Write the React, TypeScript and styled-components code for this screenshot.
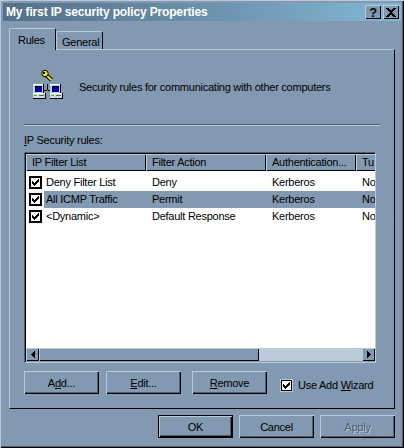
import styled, { createGlobalStyle } from "styled-components";

const FACE = "#8299b1";
const LIGHT = "#b9c9d9";
const SHADE = "#4d5f72";
const DARK = "#000000";

const GlobalStyle = createGlobalStyle`
  html, body {
    margin: 0;
    padding: 0;
    background: ${FACE};
  }
  * {
    box-sizing: border-box;
  }
`;

const columns = [
  { label: "IP Filter List", width: 120 },
  { label: "Filter Action", width: 120 },
  { label: "Authentication...", width: 90 },
  { label: "Tu", width: 40 },
];

const rules = [
  { name: "Deny Filter List", action: "Deny", auth: "Kerberos", tunnel: "None", selected: false },
  { name: "All ICMP Traffic", action: "Permit", auth: "Kerberos", tunnel: "None", selected: true },
  { name: "<Dynamic>", action: "Default Response", auth: "Kerberos", tunnel: "None", selected: false },
];

function PolicyIcon() {
  const computer = (x: number) => (
    <g shapeRendering="crispEdges">
      <rect x={x} y="15" width="11" height="9" fill="#c8d2dc" />
      <rect x={x} y="15" width="11" height="1" fill="#ffffff" />
      <rect x={x + 10} y="15" width="1" height="9" fill="#000000" />
      <rect x={x + 2} y="17" width="7" height="6" fill="#0000c0" />
      <rect x={x + 2} y="17" width="7" height="1" fill="#000000" />
      <rect x={x + 2} y="17" width="1" height="6" fill="#000000" />
      <rect x={x} y="24" width="13" height="6" fill="#d0d8e0" />
      <rect x={x} y="24" width="13" height="1" fill="#ffffff" />
      <rect x={x} y="29" width="13" height="1" fill="#000000" />
      <rect x={x + 12} y="24" width="1" height="6" fill="#000000" />
      <rect x={x + 1} y="26" width="3" height="1" fill="#00e000" />
      <rect x={x + 6} y="26" width="5" height="1" fill="#5a6672" />
    </g>
  );
  return (
    <svg width="34" height="32" viewBox="0 0 34 32">
      <g shapeRendering="crispEdges">
        <rect x="15" y="15" width="1" height="6" fill="#000000" />
        <rect x="12" y="21" width="3" height="1" fill="#000000" />
        <rect x="16" y="21" width="2" height="1" fill="#000000" />
      </g>
      {computer(1)}
      {computer(18)}
      <line x1="14" y1="6" x2="19.5" y2="11" stroke="#000000" strokeWidth="4" />
      <line x1="14" y1="6" x2="19.5" y2="11" stroke="#f4e41c" strokeWidth="2" />
      <circle cx="13" cy="4.5" r="3.2" fill="#f4e41c" stroke="#000000" strokeWidth="1" />
      <rect x="11" y="3" width="2" height="2" fill="#000000" shapeRendering="crispEdges" />
    </svg>
  );
}

function Check({ light }: { light?: boolean }) {
  return (
    <CheckBox $light={light}>
      <svg width="9" height="9" viewBox="0 0 9 9" shapeRendering="crispEdges">
        <path d="M1 3h1v1h1v1h1v-1h1v-1h1v-1h1v-1h1v3h-1v1h-1v1h-1v1h-1v1h-1v-1h-1v-1h-1z" fill="#000000" />
      </svg>
    </CheckBox>
  );
}

export default function App() {
  return (
    <Window>
      <GlobalStyle />
      <TitleBar>
        <TitleText>My first IP security policy Properties</TitleText>
        <TitleButtons>
          <TitleButton>?</TitleButton>
          <TitleButton>
            <svg width="10" height="9" viewBox="0 0 10 9" shapeRendering="crispEdges">
              <path d="M0 0h3v1h1v1h2v-1h1v-1h3v1h-1v1h-1v1h-1v1h-1v1h1v1h1v1h1v1h1v1h-3v-1h-1v-1h-2v1h-1v1h-3v-1h1v-1h1v-1h1v-1h1v-1h-1v-1h-1v-1h-1v-1h-1z" fill="#000000" />
            </svg>
          </TitleButton>
        </TitleButtons>
      </TitleBar>

      <Tabs>
        <Tab $active $width={47}>Rules</Tab>
        <Tab $width={47}>General</Tab>
      </Tabs>

      <Panel>
        <Intro>
          <PolicyIcon />
          <IntroText>Security rules for communicating with other computers</IntroText>
        </Intro>
        <Separator />
        <ListLabel>
          <u>I</u>P Security rules:
        </ListLabel>

        <ListFrame>
          <HeaderRow>
            {columns.map((col) => (
              <HeaderCell key={col.label} $width={col.width}>
                {col.label}
              </HeaderCell>
            ))}
          </HeaderRow>
          <ListBody>
            {rules.map((rule) => (
              <Row key={rule.name}>
                <NameCell>
                  <Check />
                  <NameText $selected={rule.selected}>{rule.name}</NameText>
                </NameCell>
                <RowFill $selected={rule.selected}>
                  <Cell $width={120}>{rule.action}</Cell>
                  <Cell $width={90}>{rule.auth}</Cell>
                  <Cell $width={40}>{rule.tunnel}</Cell>
                </RowFill>
              </Row>
            ))}
          </ListBody>
          <ScrollBar>
            <ArrowButton>
              <svg width="4" height="7" viewBox="0 0 4 7" shapeRendering="crispEdges">
                <path d="M3 0h1v7h-1v-1h-1v-1h-1v-1h-1v-1h1v-1h1v-1h1z" fill="#000000" />
              </svg>
            </ArrowButton>
            <Thumb />
            <Track />
            <ArrowButton>
              <svg width="4" height="7" viewBox="0 0 4 7" shapeRendering="crispEdges">
                <path d="M0 0h1v1h1v1h1v1h1v1h-1v1h-1v1h-1v1h-1z" fill="#000000" />
              </svg>
            </ArrowButton>
          </ScrollBar>
        </ListFrame>

        <ActionRow>
          <PushButton>
            A<u>d</u>d...
          </PushButton>
          <PushButton>
            <u>E</u>dit...
          </PushButton>
          <RemoveButton>
            <u>R</u>emove
          </RemoveButton>
          <WizardOption>
            <Check light />
            <span>
              Use Add <u>W</u>izard
            </span>
          </WizardOption>
        </ActionRow>
      </Panel>

      <DialogButtons>
        <PushButton $default>OK</PushButton>
        <PushButton>Cancel</PushButton>
        <PushButton $disabled>Apply</PushButton>
      </DialogButtons>
    </Window>
  );
}

const Window = styled.div`
  width: 404px;
  height: 448px;
  padding: 3px;
  background: ${FACE};
  font-family: "Liberation Sans", Arial, sans-serif;
  font-size: 11px;
  letter-spacing: -0.25px;
  color: #000;
  overflow: hidden;
  box-shadow:
    inset 1px 1px 0 ${LIGHT},
    inset -1px -1px 0 ${DARK},
    inset -2px -2px 0 ${SHADE};
`;

const TitleBar = styled.div`
  height: 18px;
  display: flex;
  align-items: center;
  justify-content: space-between;
  padding: 0 2px 0 3px;
  background: linear-gradient(90deg, #557089 0%, #6b90ab 50%, #82b8d6 100%);
`;

const TitleText = styled.div`
  color: #fff;
  font-weight: bold;
  font-size: 12px;
  letter-spacing: -0.15px;
  white-space: nowrap;
`;

const TitleButtons = styled.div`
  display: flex;
  gap: 2px;
`;

const TitleButton = styled.div`
  width: 16px;
  height: 14px;
  display: flex;
  align-items: center;
  justify-content: center;
  background: ${FACE};
  font-weight: bold;
  font-size: 13px;
  box-shadow:
    inset 1px 1px 0 ${LIGHT},
    inset -1px -1px 0 ${DARK};
`;

const Tabs = styled.div`
  height: 21px;
  margin: 7px 0 0 6px;
  display: flex;
  align-items: flex-end;
`;

const Tab = styled.div<{ $active?: boolean; $width: number }>`
  position: relative;
  z-index: ${(p) => (p.$active ? 1 : 0)};
  width: ${(p) => p.$width}px;
  height: ${(p) => (p.$active ? 22 : 18)}px;
  margin-bottom: ${(p) => (p.$active ? -1 : 0)}px;
  padding: ${(p) => (p.$active ? "1px 0 0 8px" : "2px 0 0 5px")};
  display: flex;
  align-items: center;
  background: ${FACE};
  border-top: 1px solid ${LIGHT};
  border-left: 1px solid ${LIGHT};
  border-right: 1px solid ${DARK};
  border-top-left-radius: 2px;
  border-top-right-radius: 2px;
  white-space: nowrap;
`;

const Panel = styled.div`
  width: 386px;
  height: 360px;
  margin-left: 6px;
  padding: 19px 14px 0 14px;
  border-top: 1px solid ${LIGHT};
  border-left: 1px solid ${LIGHT};
  border-right: 1px solid ${DARK};
  border-bottom: 1px solid ${DARK};
`;

const Intro = styled.div`
  height: 32px;
  display: flex;
  align-items: center;
  gap: 13px;
  padding-left: 8px;
`;

const IntroText = styled.div`
  white-space: nowrap;
  margin-top: 3px;
`;

const Separator = styled.div`
  width: 356px;
  height: 2px;
  margin-top: 23px;
  background: ${SHADE};
  border-bottom: 1px solid ${LIGHT};
`;

const ListLabel = styled.div`
  height: 14px;
  margin: 7px 0 5px;
  line-height: 14px;
`;

const ListFrame = styled.div`
  width: 352px;
  height: 211px;
  display: flex;
  flex-direction: column;
  overflow: hidden;
  border-top: 1px solid ${SHADE};
  border-left: 1px solid ${SHADE};
  border-right: 1px solid ${LIGHT};
  border-bottom: 1px solid ${LIGHT};
  box-shadow: inset 1px 1px 0 ${DARK};
  padding: 1px 0 1px 1px;
`;

const HeaderRow = styled.div`
  height: 17px;
  flex: none;
  display: flex;
  background: ${FACE};
`;

const HeaderCell = styled.div<{ $width: number }>`
  flex: none;
  width: ${(p) => p.$width}px;
  padding-left: 6px;
  line-height: 16px;
  white-space: nowrap;
  overflow: hidden;
  box-shadow:
    inset 1px 1px 0 ${LIGHT},
    inset -1px -1px 0 ${DARK};
`;

const ListBody = styled.div`
  flex: 1;
  padding-top: 3px;
  background: #fff;
`;

const Row = styled.div`
  height: 17px;
  display: flex;
  line-height: 17px;
  white-space: nowrap;
`;

const NameCell = styled.div`
  flex: none;
  width: 120px;
  padding-left: 3px;
  display: flex;
  align-items: center;
  gap: 2px;
`;

const NameText = styled.span<{ $selected?: boolean }>`
  flex: 1;
  padding-left: 2px;
  background: ${(p) => (p.$selected ? FACE : "transparent")};
`;

const RowFill = styled.div<{ $selected?: boolean }>`
  flex: 1;
  display: flex;
  overflow: hidden;
  background: ${(p) => (p.$selected ? FACE : "transparent")};
`;

const Cell = styled.div<{ $width: number }>`
  flex: none;
  width: ${(p) => p.$width}px;
  padding-left: 6px;
`;

const CheckBox = styled.span<{ $light?: boolean }>`
  flex: none;
  width: ${(p) => (p.$light ? 11 : 13)}px;
  height: ${(p) => (p.$light ? 11 : 13)}px;
  display: flex;
  align-items: center;
  justify-content: center;
  background: #fff;
  border: ${(p) => (p.$light ? 1 : 2)}px solid ${DARK};
  box-shadow: ${(p) => (p.$light ? `0 0 0 1px ${LIGHT}` : "none")};
`;

const ScrollBar = styled.div`
  height: 13px;
  flex: none;
  display: flex;
  background: #bccbd9;
`;

const ArrowButton = styled.div`
  width: 13px;
  display: flex;
  align-items: center;
  justify-content: center;
  background: ${FACE};
  box-shadow:
    inset 1px 1px 0 ${LIGHT},
    inset -1px -1px 0 ${DARK};
`;

const Thumb = styled.div`
  width: 220px;
  background: ${FACE};
  box-shadow:
    inset 1px 1px 0 ${LIGHT},
    inset -1px -1px 0 ${DARK};
`;

const Track = styled.div`
  flex: 1;
`;

const ActionRow = styled.div`
  margin-top: 8px;
  display: flex;
  align-items: center;
  gap: 7px;
`;

const PushButton = styled.div<{ $default?: boolean; $disabled?: boolean }>`
  width: 75px;
  height: 23px;
  display: flex;
  align-items: center;
  justify-content: center;
  white-space: pre;
  background: ${FACE};
  color: ${(p) => (p.$disabled ? SHADE : "#000")};
  text-shadow: ${(p) => (p.$disabled ? `1px 1px 0 ${LIGHT}` : "none")};
  border: ${(p) => (p.$default ? `1px solid ${DARK}` : "none")};
  box-shadow:
    inset 1px 1px 0 ${LIGHT},
    inset -1px -1px 0 ${DARK},
    inset -2px -2px 0 ${SHADE};
`;

const RemoveButton = styled(PushButton)`
  margin-left: 4px;
`;

const WizardOption = styled.div`
  margin: 5px 0 0 7px;
  display: flex;
  align-items: center;
  gap: 6px;
  white-space: nowrap;
`;

const DialogButtons = styled.div`
  width: 386px;
  margin: 6px 0 0 6px;
  display: flex;
  justify-content: flex-end;
  gap: 6px;
`;
